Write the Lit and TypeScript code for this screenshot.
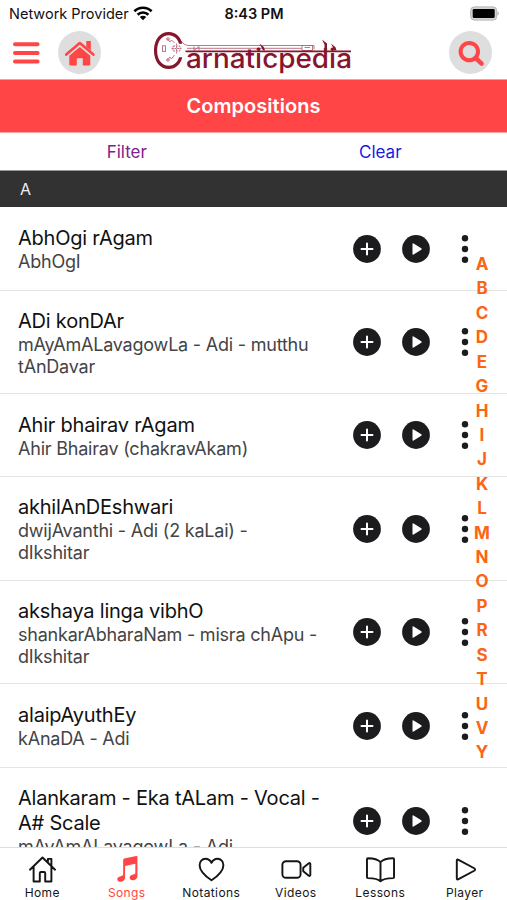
import { LitElement, html, css, svg } from "lit";
import { customElement, property } from "lit/decorators.js";

interface Song {
  title: string;
  detail: string;
}

const SONGS: Song[] = [
  { title: "AbhOgi rAgam", detail: "AbhOgI" },
  { title: "ADi konDAr", detail: "mAyAmALavagowLa - Adi - mutthu tAnDavar" },
  { title: "Ahir bhairav rAgam", detail: "Ahir Bhairav (chakravAkam)" },
  { title: "akhilAnDEshwari", detail: "dwijAvanthi - Adi (2 kaLai) - dIkshitar" },
  { title: "akshaya linga vibhO", detail: "shankarAbharaNam - misra chApu - dIkshitar" },
  { title: "alaipAyuthEy", detail: "kAnaDA - Adi" },
  { title: "Alankaram - Eka tALam - Vocal - A# Scale", detail: "mAyAmALavagowLa - Adi" },
];

const LETTERS = "ABCDEGHIJKLMNOPRSTUVY".split("");

const TABS = [
  {
    label: "Home",
    icon: svg`<path d="M2 15.2 15 2.600l13 12.600M5.800 12v15.400h6.400v-8.600q0-1.200 1.200-1.200h3.200q1.200 0 1.200 1.200v8.600h6.400V12M20.600 7.600V4h3.600v7"/>`,
  },
  {
    label: "Songs",
    icon: svg`<path class="solid" d="M10.500 5.200Q10.500 4 11.700 3.700L24 1q1.300-.2 1.300 1.100v19.600c0 2.800-2 4.300-4.800 4.500-2 .1-3.300-.9-3.300-2.600 0-1.900 1.500-2.800 3.700-3.300 1.500-.3 2.200-.6 2.200-1.900V9L12.500 11.300v12c0 2.800-2 4.300-4.800 4.500-2 .1-3.300-.9-3.300-2.600 0-1.900 1.500-2.800 3.700-3.300 1.600-.3 2.400-.6 2.400-1.900z"/>`,
  },
  {
    label: "Notations",
    icon: svg`<path d="M15 26.200C9.500 22.400 2.700 17 2.700 10.500c0-3.800 2.600-6.600 6-6.600 2.800 0 5 1.600 6.300 4.200 1.300-2.600 3.500-4.200 6.300-4.200 3.400 0 6 2.800 6 6.600 0 6.500-6.800 11.900-12.300 15.700z"/>`,
  },
  {
    label: "Videos",
    icon: svg`<rect x="0.400" y="6.400" width="18.800" height="17.200" rx="3.800"/><path d="M22 13.200 27.400 8.800q1.900-1.300 1.900.7v11q0 2-1.900.7l-5.400-4.400z"/>`,
  },
  {
    label: "Lessons",
    icon: svg`<path d="M15 7.400C12.500 4.800 8 3.500 2 3.400q-1 0-1 1v18.400q0 1 1 1.100c6 .1 10.500.8 13 3.300 2.500-2.500 7-3.200 13-3.300q1-.1 1-1.100V4.400q0-1-1-1C22 3.500 17.500 4.800 15 7.400zV26"/>`,
  },
  {
    label: "Player",
    icon: svg`<path d="M6 6v18q0 2 1.800 1L24 16.300q1.900-1.300 0-2.600L7.800 5q-1.800-1-1.800 1z"/>`,
  },
];

@customElement("status-bar")
class StatusBar extends LitElement {
  static styles = css`
    :host {
      display: grid;
      grid-template-columns: 1fr auto 1fr;
      align-items: center;
      height: 27px;
      padding: 0 8px 0 9px;
      box-sizing: border-box;
      color: #111;
      font-size: 14.5px;
    }
    .carrier {
      display: flex;
      align-items: center;
      gap: 4px;
    }
    .time {
      font-weight: 600;
    }
    .battery {
      justify-self: end;
    }
    svg {
      display: block;
    }
  `;
  render() {
    return html`
      <div class="carrier">
        <span>Network Provider</span>
        <svg width="20" height="15" viewBox="0 0 20 15">
          <g fill="none" stroke="#000" stroke-width="2.6">
            <path d="M1.400 5.300a12.300 12.300 0 0 1 17.200 0" />
            <path d="M4.600 8.700a7.700 7.700 0 0 1 10.800 0" />
          </g>
          <path d="M10 14.300 6.800 11.100a4.600 4.600 0 0 1 6.400 0z" />
        </svg>
      </div>
      <div class="time">8:43 PM</div>
      <svg class="battery" width="30" height="15" viewBox="0 0 30 15">
        <rect x="1.700" y=".9" width="26" height="13.200" rx="3.600" fill="#d4d4d4" stroke="#b4b4b4" stroke-width="1" />
        <rect x="3.700" y="2.900" width="22" height="9.200" rx="1.400" />
        <path d="M28.500 5.300q2.600 2.200 0 4.400z" fill="#aaa" />
      </svg>
    `;
  }
}

@customElement("app-header")
class AppHeader extends LitElement {
  static styles = css`
    :host {
      display: grid;
      grid-template-columns: 46px 42px 1fr 43px;
      align-items: center;
      height: 53px;
      padding: 0 15px 1px 12px;
      box-sizing: border-box;
      border-bottom: 1px solid #f7a09c;
    }
    svg {
      display: block;
    }
    .round {
      width: 43px;
      height: 43px;
      border-radius: 50%;
      background: #dedede;
      display: grid;
      place-items: center;
    }
    .logo {
      margin-left: 48px;
      overflow: visible;
    }
    .big {
      font-family: "Inter", sans-serif;
      font-weight: 300;
    }
    .word {
      font-family: "Inter", sans-serif;
      font-weight: 500;
    }
  `;
  render() {
    return html`
      <svg width="28" height="24" viewBox="0 0 28 24">
        <path d="M3 3.200h22.600M3 11.900h22.600M3 20.600h22.600" stroke="#ff4545" stroke-width="4" stroke-linecap="round" />
      </svg>
      <div class="round">
        <svg width="32" height="26" viewBox="0 0 32 26" fill="#ff4545">
          <path d="M2.200 14.600 15.800 3l13.600 11.600" fill="none" stroke="#ff4545" stroke-width="2.6" stroke-linecap="round" stroke-linejoin="round" />
          <path d="M22.300 1h4.500v9.500l-4.500-3.800z" />
          <path d="M5.300 15.700 15.800 7l10.500 8.700v8.500q0 1.300-1.300 1.300h-6.200v-7.300h-6v7.300H6.600q-1.300 0-1.300-1.300z" />
        </svg>
      </div>
      <svg class="logo" width="206" height="51" viewBox="148 27 206 51" fill="#86152d">
        <g fill="none" stroke="#b5667a" stroke-width=".9">
          <path d="M181 41q3 4.500 7 4.500h126v4M187 48.300h115M302 45.500h10.500v5H302zM304.500 47.500h5.500M194 46.500v4l5-4v4" />
          <rect x="162.500" y="45.800" width="3" height="5.600" />
          <path d="M173 46h7v5h-7zM176.500 43.500v10M171.500 48.500h10" stroke-dasharray="2 .8" />
          <path d="m167 38.500 3 3.500 1.500-2 3 3M167 60.500l3-3.500 1.500 2 3-4" />
          <circle cx="168" cy="39" r="1.300" /><circle cx="168" cy="60" r="1.300" />
        </g>
        <text class="big" x="151" y="68.500" font-size="51" textLength="34" lengthAdjust="spacingAndGlyphs">C</text>
        <text class="word" x="186" y="67.500" font-size="27" textLength="166" lengthAdjust="spacingAndGlyphs">arnaticpedia</text>
        <path d="M185.500 50.500H351v1.800H185.500z" />
        <path d="m259.500 43.500 4.500 3.800 1 3.200h-2zM331 43.500l4.500 3.800 1 3.200h-2zM322 39.500l5 4v7h-2.500v-6z" />
      </svg>
      <div class="round">
        <svg width="28" height="28" viewBox="0 0 28 28" fill="none" stroke="#ff4545">
          <circle cx="12.300" cy="12.600" r="8.700" stroke-width="4" />
          <path d="m19 19.300 5.600 5.400" stroke-width="4.400" stroke-linecap="round" />
        </svg>
      </div>
    `;
  }
}

@customElement("song-row")
class SongRow extends LitElement {
  @property({ attribute: false }) song!: Song;
  static styles = css`
    :host {
      display: flex;
      align-items: center;
      justify-content: space-between;
      padding: 0 38px 0 18px;
      box-sizing: border-box;
      border-bottom: 1px solid #e4e4e4;
    }
    .text {
      width: 304px;
      padding-top: 2px;
    }
    .title {
      font-size: 20px;
      line-height: 25px;
      letter-spacing: -0.22px;
      color: #111;
    }
    .detail {
      font-size: 18px;
      line-height: 22px;
      letter-spacing: -0.21px;
      color: #444;
    }
    .actions {
      display: flex;
      align-items: center;
      gap: 21px;
    }
    svg {
      display: block;
    }
    .more {
      margin-left: 10px;
    }
  `;
  render() {
    return html`
      <div class="text">
        <div class="title">${this.song.title}</div>
        <div class="detail">${this.song.detail}</div>
      </div>
      <div class="actions">
        <svg width="28" height="28" viewBox="0 0 28 28">
          <circle cx="14" cy="14" r="13.900" fill="#1c1c1e" />
          <path d="M14 8.500v11M8.500 14h11" stroke="#fff" stroke-width="2" stroke-linecap="round" />
        </svg>
        <svg width="28" height="28" viewBox="0 0 28 28">
          <circle cx="14" cy="14" r="13.900" fill="#1c1c1e" />
          <path d="M10.500 9v10q0 1.200 1.100.6l7.700-4.900q1-.7 0-1.400l-7.700-4.900q-1.100-.6-1.100.6z" fill="#fff" />
        </svg>
        <svg class="more" width="8" height="28" viewBox="0 0 8 28" fill="#1c1c1e">
          <circle cx="4" cy="3.300" r="3.200" /><circle cx="4" cy="14" r="3.200" /><circle cx="4" cy="24.700" r="3.200" />
        </svg>
      </div>
    `;
  }
}

@customElement("tab-bar")
class TabBar extends LitElement {
  static styles = css`
    :host {
      display: grid;
      grid-template-columns: repeat(6, 1fr);
      height: 53px;
      border-top: 1px solid #dedede;
      box-sizing: border-box;
      background: #fff;
      padding-top: 7px;
      position: relative;
    }
    .tab {
      display: flex;
      flex-direction: column;
      align-items: center;
      color: #151515;
    }
    .active {
      color: #ff4545;
    }
    .label {
      font-size: 12px;
      line-height: 15px;
      letter-spacing: 0.4px;
      margin-top: 0.5px;
    }
    svg {
      display: block;
      fill: none;
      stroke: currentColor;
      stroke-width: 2;
      stroke-linejoin: round;
      stroke-linecap: round;
      margin-left: 1px;
      overflow: visible;
    }
    .solid {
      fill: currentColor;
      stroke: none;
    }
  `;
  render() {
    return TABS.map(
      (tab) => html`<div class="tab ${tab.label === "Songs" ? "active" : ""}">
        <svg width="29" height="29" viewBox="0 0 30 30">${tab.icon}</svg>
        <div class="label">${tab.label}</div>
      </div>`,
    );
  }
}

@customElement("app-root")
class AppRoot extends LitElement {
  static styles = css`
    :host {
      display: flex;
      flex-direction: column;
      position: relative;
      height: 900px;
      overflow: hidden;
      background: #fff;
      font-family: "Inter", sans-serif;
    }
    .heading {
      height: 53px;
      line-height: 53px;
      box-sizing: border-box;
      background: #ff4545;
      border-bottom: 1px solid #ffa5a5;
      color: #fff;
      text-align: center;
      font-size: 20px;
      font-weight: 600;
      letter-spacing: 0.05px;
    }
    .filters {
      display: grid;
      grid-template-columns: 1fr 1fr;
      height: 38px;
      line-height: 38px;
      box-sizing: border-box;
      border-bottom: 1px solid #999;
      text-align: center;
      font-size: 17px;
    }
    .filter {
      color: #80228a;
    }
    .clear {
      color: #1a1ae6;
    }
    .section {
      height: 36px;
      line-height: 36px;
      padding-left: 20px;
      background: #323232;
      color: #eee;
      font-size: 16px;
    }
    .list {
      flex: 1;
      min-height: 0;
      overflow: hidden;
      display: grid;
      grid-template-rows: 84px 103px 83px 104px 103px 84px 106px;
    }
    .index {
      position: absolute;
      right: 15px;
      top: 252px;
      width: 20px;
      display: grid;
      grid-auto-rows: 24.43px;
      line-height: 24.43px;
      text-align: center;
      color: #fb6514;
      font-size: 17px;
      font-weight: 650;
    }
  `;
  render() {
    return html`
      <status-bar></status-bar>
      <app-header></app-header>
      <div class="heading">Compositions</div>
      <div class="filters">
        <div class="filter">Filter</div>
        <div class="clear">Clear</div>
      </div>
      <div class="section">A</div>
      <div class="list">${SONGS.map((song) => html`<song-row .song=${song}></song-row>`)}</div>
      <div class="index">${LETTERS.map((letter) => html`<div>${letter}</div>`)}</div>
      <tab-bar></tab-bar>
    `;
  }
}
